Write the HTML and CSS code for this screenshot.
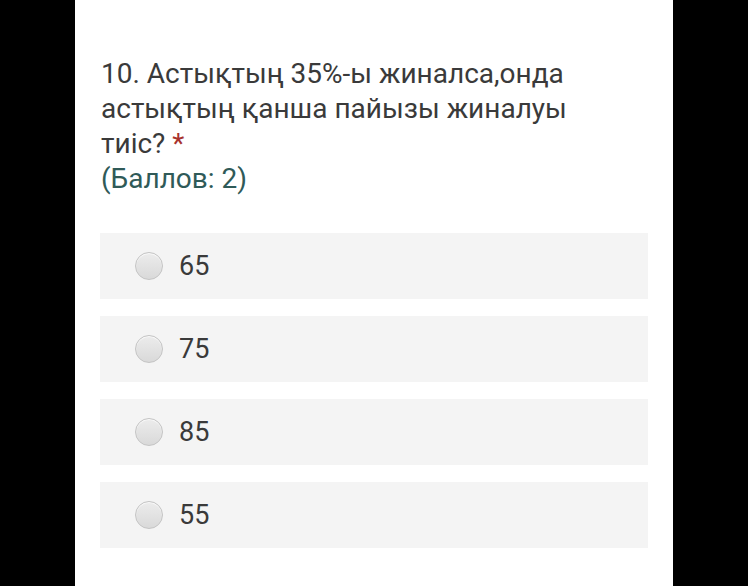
FILE: index.html
```html
<!DOCTYPE html>
<html lang="kk">
<head>
<meta charset="utf-8">
<title>Сұрақ 10</title>
<link rel="stylesheet" href="styles.css">
</head>
<body>
<div class="panel">
  <div class="question">
    <div class="title">10. Астықтың 35%-ы жиналса,онда астықтың қанша пайызы жиналуы тиіс? <span class="req">*</span></div>
    <div class="points">(Баллов: 2)</div>
  </div>
  <div class="options">
    <label class="option"><span class="radio"></span><span class="label">65</span></label>
    <label class="option"><span class="radio"></span><span class="label">75</span></label>
    <label class="option"><span class="radio"></span><span class="label">85</span></label>
    <label class="option"><span class="radio"></span><span class="label">55</span></label>
  </div>
</div>
</body>
</html>
```

FILE: styles.css
```css
html, body {
  margin: 0;
  padding: 0;
  background: #000;
  height: 100%;
}
body {
  display: flex;
  justify-content: flex-start;
  font-family: Roboto, "Noto Sans", "Liberation Sans", sans-serif;
}
.panel {
  margin-left: 75px;
  width: 598px;
  min-height: 586px;
  background: #fff;
  box-sizing: border-box;
  padding: 56px 25px 0 25px;
}
.question {
  font-size: 28px;
  line-height: 35px;
  color: #3a3a3a;
  max-width: 520px;
  padding-left: 1px;
}
.req {
  color: #a8322d;
}
.points {
  color: #2f5a58;
}
.options {
  margin-top: 37px;
  display: flex;
  flex-direction: column;
  gap: 17px;
}
.option {
  display: flex;
  align-items: center;
  height: 66px;
  background: #f4f4f4;
  padding-left: 35px;
}
.radio {
  width: 28px;
  height: 28px;
  border-radius: 50%;
  box-sizing: border-box;
  border: 1px solid #c4c4c4;
  background: linear-gradient(#ececec, #d9d9d9);
  box-shadow: inset 0 1px 1px rgba(255,255,255,0.8);
  flex: none;
}
.label {
  margin-left: 16px;
  font-size: 27px;
  color: #3a3a3a;
}
```
